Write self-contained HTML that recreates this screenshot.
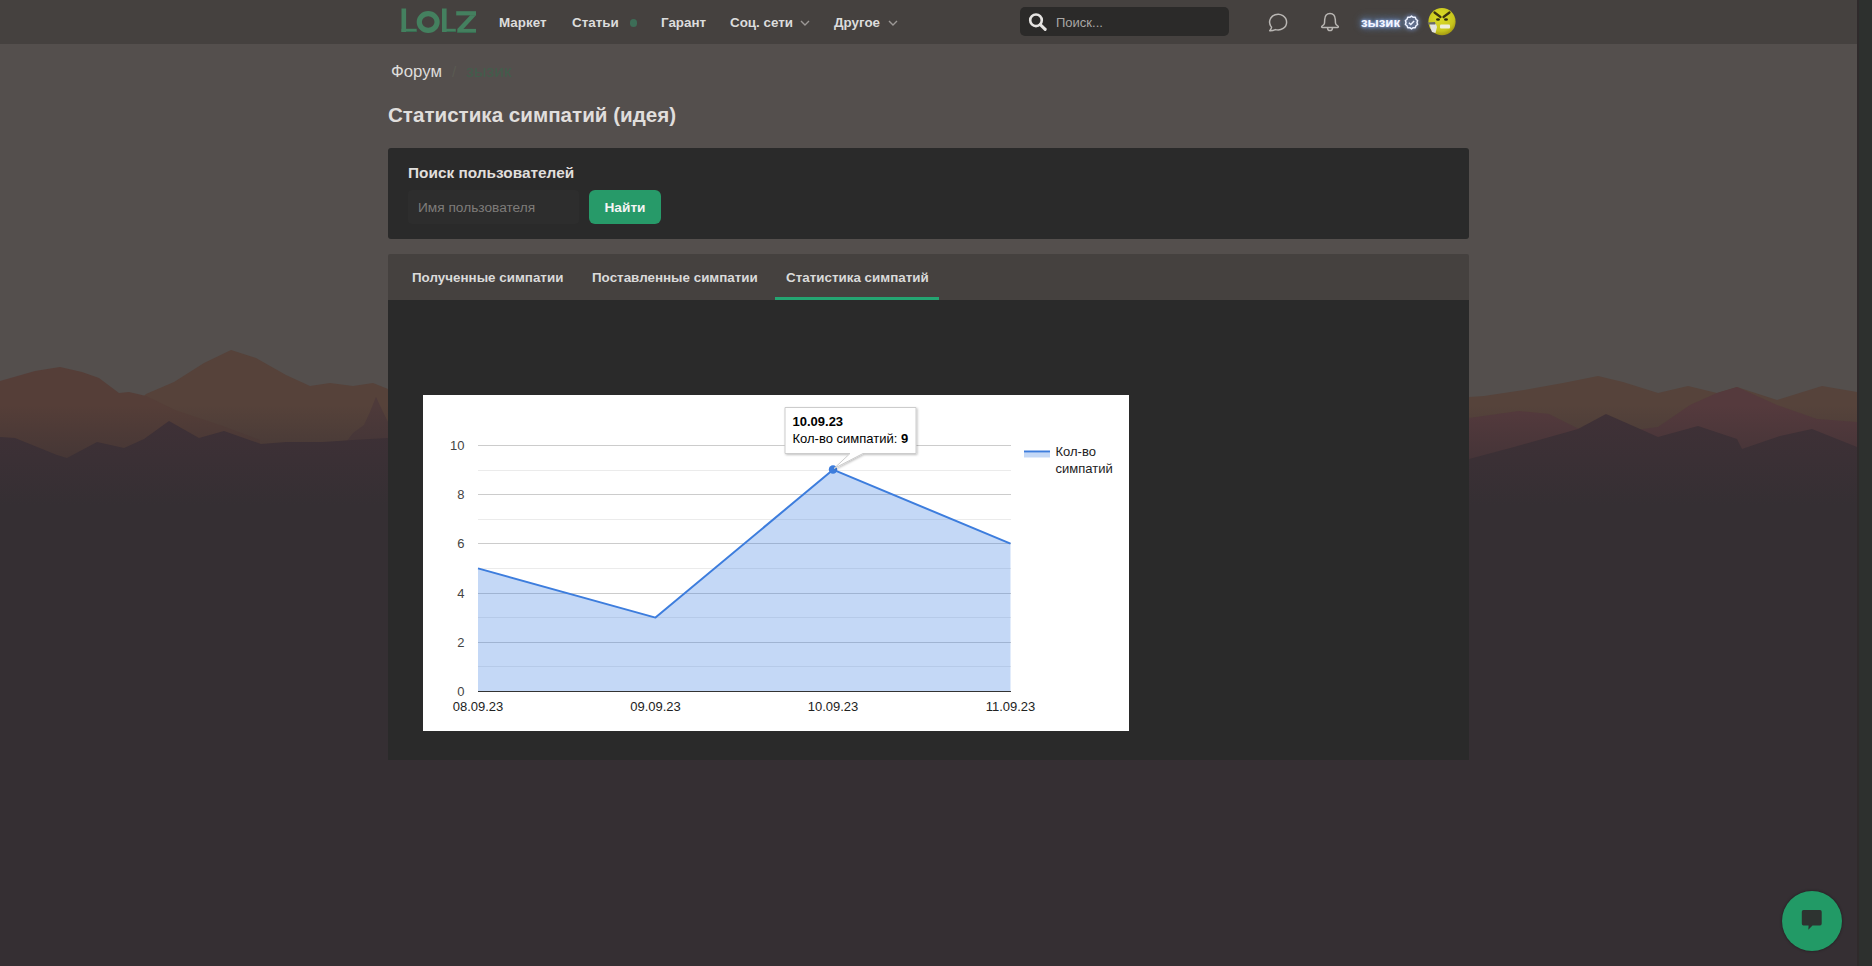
<!DOCTYPE html>
<html><head><meta charset="utf-8">
<style>
*{box-sizing:border-box;margin:0;padding:0}
html,body{width:1872px;height:966px;overflow:hidden}
body{font-family:"Liberation Sans",sans-serif;background:#352f33;position:relative;color:#d6d6d6}
.abs{position:absolute;white-space:nowrap}
#bg{position:absolute;left:0;top:0;width:1857px;height:966px}
#scroll{position:absolute;left:1857px;top:0;width:15px;height:966px;background:#2d302e;border-left:2px solid #2f2a2b}
#hdr{position:absolute;left:0;top:0;width:1857px;height:44px;background:#45413f}
.nav{position:absolute;top:15px;font-size:13.4px;font-weight:bold;color:#dcdcdc;line-height:16px}
#panel1{position:absolute;left:388px;top:148px;width:1081px;height:91px;background:#2a2a2a;border-radius:3px}
#tabs{position:absolute;left:388px;top:254px;width:1081px;height:46px;background:#45413f;border-radius:2px 2px 0 0}
#content{position:absolute;left:388px;top:300px;width:1081px;height:460px;background:#2a2a2a;border-radius:0}
.tab{position:absolute;top:270px;font-size:13.4px;font-weight:bold;color:#dadada;line-height:16px}
#chart{position:absolute;left:423px;top:395px;width:706px;height:336px;background:#fff}
</style></head>
<body>
<svg id="bg" width="1857" height="966" viewBox="0 0 1857 966"><g style="filter:blur(0.6px)">
  <defs>
    <linearGradient id="fade" gradientUnits="userSpaceOnUse" x1="0" y1="405" x2="0" y2="505">
      <stop offset="0" stop-color="#352f33" stop-opacity="0"/><stop offset="0.5" stop-color="#352f33" stop-opacity="0.45"/><stop offset="1" stop-color="#352f33" stop-opacity="1"/>
    </linearGradient>
  </defs>
  <rect x="0" y="0" width="1857" height="600" fill="#544f4d"/>
  <!-- center brown peak (left) -->
  <polygon fill="#56423a" points="120,420 146,394 174,382 204,363 231,350 256,358 286,375 310,386 330,383 353,386 373,383 388,389 388,470 120,470"/>
  <!-- left red-brown ridge -->
  <polygon fill="#553e38" points="0,381 35,371 60,367 82,372 99,378 119,393 129,392 146,396 175,410 220,425 260,440 260,600 0,600"/>
    <!-- right brown back -->
  <polygon fill="#56433b" points="1469,397 1484,396 1524,390 1563,383 1598,376 1623,382 1658,393 1688,386 1717,393 1737,387 1777,400 1822,386 1857,392 1857,470 1469,470"/>
  <!-- right red layer -->
  <polygon fill="#553a3d" points="1469,418 1519,411 1549,414 1577,428 1620,432 1658,427 1690,405 1717,393 1737,387 1777,405 1817,419 1857,422 1857,480 1469,480"/>
  <polygon fill="#4e3a3a" points="340,450 353,433 364,425 370,412 376,397 383,412 388,422 388,470 340,470"/>
  <!-- dark layer -->
  <polygon fill="#403137" points="0,437 15,438 57,455 67,458 97,442 124,448 144,439 169,421 199,438 224,431 261,444 286,442 323,442 353,440 388,438 388,600 0,600"/>
  <polygon fill="#403137" points="1469,459 1514,447 1578,429 1606,414 1631,425 1658,437 1698,426 1737,439 1742,449 1780,436 1812,429 1857,447 1857,600 1469,600"/>
  <rect x="0" y="405" width="1857" height="101" fill="url(#fade)"/>
  <rect x="0" y="505" width="1857" height="461" fill="#352f33"/>
</g></svg>
<div id="scroll"></div>
<div id="hdr">
  <svg class="abs" style="left:400px;top:0px" width="80" height="40" viewBox="0 0 80 40">
    <g fill="#44805f">
      <rect x="1.5" y="8.5" width="4.6" height="23.5"/>
      <rect x="1.5" y="28.8" width="15.2" height="3.2"/>
      <rect x="42" y="8.5" width="4.6" height="23.5"/>
      <rect x="42" y="28.8" width="13.8" height="3.2"/>
      <rect x="56.2" y="11.2" width="19.8" height="4.2"/>
      <rect x="57.3" y="28.9" width="18.7" height="4"/>
      <polygon points="70.2,15.3 76,15.3 63.4,29 57.3,29"/>
    </g>
    <ellipse cx="28.2" cy="22" rx="8.9" ry="8.4" fill="none" stroke="#44805f" stroke-width="5.2"/>
    <g fill="#2f5f48" opacity="0.55">
      <rect x="6.1" y="31" width="10.6" height="1"/>
      <rect x="46.6" y="31" width="9.2" height="1"/>
      <rect x="57.3" y="31.9" width="18.7" height="1"/>
    </g>
  </svg>
  <div class="nav" style="left:499px">Маркет</div>
  <div class="nav" style="left:572px">Статьи</div>
  <div class="abs" style="left:629.5px;top:19px;width:7.5px;height:7.5px;border-radius:50%;background:#3d6d57"></div>
  <div class="nav" style="left:661px">Гарант</div>
  <div class="nav" style="left:730px">Соц. сети</div>
  <svg class="abs" style="left:799px;top:19px" width="12" height="8" viewBox="0 0 12 8"><path d="M2 2 L6 6 L10 2" fill="none" stroke="#9c9896" stroke-width="1.4"/></svg>
  <div class="nav" style="left:834px">Другое</div>
  <svg class="abs" style="left:887px;top:19px" width="12" height="8" viewBox="0 0 12 8"><path d="M2 2 L6 6 L10 2" fill="none" stroke="#9c9896" stroke-width="1.4"/></svg>
  <div class="abs" style="left:1020px;top:7px;width:209px;height:29px;background:#2b2a29;border-radius:5px"></div>
  <svg class="abs" style="left:1026px;top:10px" width="24" height="24" viewBox="0 0 24 24">
    <circle cx="10" cy="10.3" r="5.8" fill="none" stroke="#e6e4e2" stroke-width="2.6"/>
    <path d="M14.3 14.6 L19.2 19.4" stroke="#e6e4e2" stroke-width="3" stroke-linecap="round"/>
  </svg>
  <div class="abs" style="left:1056px;top:15px;font-size:13px;line-height:15px;color:#a9a7a5">Поиск...</div>
  <svg class="abs" style="left:1266px;top:10px" width="24" height="24" viewBox="0 0 24 24">
    <path d="M5.6 17.2 A8.5 7.9 0 1 1 9.4 19.6 Q6.8 20.9 3.7 20.8 Q5.2 19.3 5.6 17.2 Z" fill="none" stroke="#b9b6b3" stroke-width="1.5" stroke-linejoin="round"/>
  </svg>
  <svg class="abs" style="left:1318px;top:10px" width="24" height="24" viewBox="0 0 24 24">
    <path d="M12 3.6 C8.3 3.6 6.9 6.2 6.7 9.5 L6.5 13.2 C6.4 14.3 5.3 15.2 4.1 16 C3.3 16.6 3.6 17.6 4.6 17.6 H19.4 C20.4 17.6 20.7 16.6 19.9 16 C18.7 15.2 17.6 14.3 17.5 13.2 L17.3 9.5 C17.1 6.2 15.7 3.6 12 3.6 Z" fill="none" stroke="#b9b6b3" stroke-width="1.5"/>
    <path d="M9.6 17.9 A2.4 2.6 0 0 0 14.4 17.9" fill="none" stroke="#b9b6b3" stroke-width="1.5"/>
  </svg>
  <div class="abs" style="left:1358px;top:15px;width:62px;height:15px;border-radius:8px;background:rgba(120,170,210,0.16);filter:blur(3px)"></div>
  <div class="abs" style="left:1361px;top:15px;font-size:13.2px;font-weight:bold;line-height:16px;color:#f4f6ff;text-shadow:0 0 3px #a8c4ff,0 0 6px #5f86d8">зызик</div>
  <svg class="abs" style="left:1403px;top:13.5px;filter:drop-shadow(0 0 2px #8fb0ff)" width="17" height="17" viewBox="0 0 17 17">
    <polygon points="8.50,2.10 10.20,3.27 12.26,3.32 12.95,5.27 14.59,6.52 14.00,8.50 14.59,10.48 12.95,11.73 12.26,13.68 10.20,13.73 8.50,14.90 6.80,13.73 4.74,13.68 4.05,11.73 2.41,10.48 3.00,8.50 2.41,6.52 4.05,5.27 4.74,3.32 6.80,3.27" fill="none" stroke="#eef2ff" stroke-width="1.5" stroke-linejoin="round"/>
    <path d="M5.9 8.7 L7.8 10.5 L11.1 7" fill="none" stroke="#eef2ff" stroke-width="1.5"/>
  </svg>
  <svg class="abs" style="left:1427px;top:7px" width="30" height="30" viewBox="0 0 30 30">
    <defs><radialGradient id="face" cx="0.45" cy="0.35" r="0.7"><stop offset="0" stop-color="#dede2a"/><stop offset="0.7" stop-color="#c6c41c"/><stop offset="1" stop-color="#9a8c10"/></radialGradient></defs>
    <circle cx="15" cy="14.7" r="13.6" fill="url(#face)"/>
    <path d="M7.5 5.5 L13.5 10 M22.5 5.5 L16.5 10" stroke="#3a3210" stroke-width="2.2" stroke-linecap="round"/>
    <ellipse cx="11" cy="12.5" rx="2" ry="1.3" fill="#2a2a10"/>
    <ellipse cx="19" cy="12.5" rx="2" ry="1.3" fill="#2a2a10"/>
    <rect x="13" y="17.5" width="10" height="4" rx="1" fill="#efefdc"/>
    <path d="M2.5 16 L9 17 L10 20 L8.5 26 L5 25 L3.5 21 Z" fill="#e4e4e0"/>
    <path d="M0.5 15.5 L8 15 L8.5 17.5 L1.5 17.5 Z" fill="#6a6a6a"/>
  </svg>
</div>
<div class="abs" style="left:391px;top:62px;font-size:16.8px;line-height:19px;color:#dedcda">Форум</div>
<div class="abs" style="left:452px;top:62px;font-size:15px;line-height:19px;color:#5a5a52">/</div>
<div class="abs" style="left:466px;top:62px;font-size:17.3px;line-height:19px;color:#425e4c;filter:blur(0.7px)">зызик</div>
<div class="abs" style="left:388px;top:103px;font-size:20.6px;line-height:24px;font-weight:bold;color:#e0dedc">Статистика симпатий (идея)</div>

<div id="panel1">
  <div class="abs" style="left:20px;top:16px;font-size:15.4px;line-height:18px;font-weight:bold;color:#e0dedc">Поиск пользователей</div>
  <div class="abs" style="left:20px;top:42px;width:171px;height:34px;background:#2d2d2d;border-radius:4px"></div>
  <div class="abs" style="left:30px;top:52px;font-size:13.7px;line-height:16px;color:#7e7c7a">Имя пользователя</div>
  <div class="abs" style="left:201px;top:42px;width:72px;height:34px;background:#279a69;border-radius:6px;color:#f4f4f4;font-size:13.7px;font-weight:bold;text-align:center;line-height:35px">Найти</div>
</div>

<div id="tabs"></div>
<div class="tab" style="left:412px">Полученные симпатии</div>
<div class="tab" style="left:592px">Поставленные симпатии</div>
<div class="tab" style="left:786px">Статистика симпатий</div>
<div class="abs" style="left:775px;top:297px;width:164px;height:3px;background:#24a572"></div>
<div id="content"></div>

<svg id="chart" width="706" height="336" viewBox="0 0 706 336" style="font-family:'Liberation Sans',sans-serif">
  <rect width="706" height="336" fill="#fff"/>
  <g shape-rendering="crispEdges">
    <rect x="55" y="50" width="533" height="1" fill="#cccccc"/>
    <rect x="55" y="75" width="533" height="1" fill="#ebebeb"/>
    <rect x="55" y="99" width="533" height="1" fill="#cccccc"/>
    <rect x="55" y="124" width="533" height="1" fill="#ebebeb"/>
    <rect x="55" y="148" width="533" height="1" fill="#cccccc"/>
    <rect x="55" y="173" width="533" height="1" fill="#ebebeb"/>
    <rect x="55" y="198" width="533" height="1" fill="#cccccc"/>
    <rect x="55" y="222" width="533" height="1" fill="#ebebeb"/>
    <rect x="55" y="247" width="533" height="1" fill="#cccccc"/>
    <rect x="55" y="271" width="533" height="1" fill="#ebebeb"/>
  </g>
  <path d="M55 173.4 L232.5 222.6 L410 74.7 L587.5 148.6 L587.5 296 L55 296 Z" fill="#3d7fe0" fill-opacity="0.3"/>
  <rect x="55" y="296" width="533" height="1" fill="#333" shape-rendering="crispEdges"/>
  <path d="M55 173.4 L232.5 222.6 L410 74.7 L587.5 148.6" fill="none" stroke="#3d7ddd" stroke-width="2" stroke-linejoin="round"/>
  <circle cx="410" cy="74.5" r="4.2" fill="#3d7ddd"/>
  <g font-size="13" fill="#444" text-anchor="end">
    <text x="41.5" y="55">10</text>
    <text x="41.5" y="104">8</text>
    <text x="41.5" y="153">6</text>
    <text x="41.5" y="203">4</text>
    <text x="41.5" y="252">2</text>
    <text x="41.5" y="301">0</text>
  </g>
  <g font-size="13" fill="#222" text-anchor="middle">
    <text x="55" y="316">08.09.23</text>
    <text x="232.5" y="316">09.09.23</text>
    <text x="410" y="316">10.09.23</text>
    <text x="587.5" y="316">11.09.23</text>
  </g>
  <!-- legend -->
  <rect x="601" y="55.5" width="26" height="2" fill="#3d7ddd"/>
  <rect x="601" y="57.5" width="26" height="5" fill="#3d7fe0" fill-opacity="0.3"/>
  <g font-size="13" fill="#222">
    <text x="632.5" y="61">Кол-во</text>
    <text x="632.5" y="78">симпатий</text>
  </g>
  <!-- tooltip -->
  <filter id="sh" x="-20%" y="-20%" width="140%" height="160%"><feDropShadow dx="1" dy="1" stdDeviation="1" flood-color="#000" flood-opacity="0.25"/></filter>
  <path d="M362 12.5 H493 V58.5 H440 L411 73.5 L427 58.5 H362 Z" fill="#fff" stroke="#cccccc" stroke-width="1" filter="url(#sh)"/>
  <g font-size="13" fill="#000">
    <text x="369.5" y="31" font-weight="bold">10.09.23</text>
    <text x="369.5" y="48">Кол-во симпатий: <tspan font-weight="bold">9</tspan></text>
  </g>
</svg>

<div class="abs" style="left:1782px;top:891px;width:60px;height:60px;border-radius:50%;background:#229a66;box-shadow:0 0 3px rgba(0,0,0,0.45)"></div>
<svg class="abs" style="left:1800px;top:908px" width="24" height="24" viewBox="0 0 24 24">
    <path d="M3.5 2 H20 Q21.7 2 21.7 3.7 V15.5 Q21.7 17.4 20 17.4 H12.5 L8.3 21.8 L8.6 17.4 H3.5 Q1.8 17.4 1.8 15.5 V3.7 Q1.8 2 3.5 2 Z" fill="#2d3330"/>
  </svg>
</body></html>
